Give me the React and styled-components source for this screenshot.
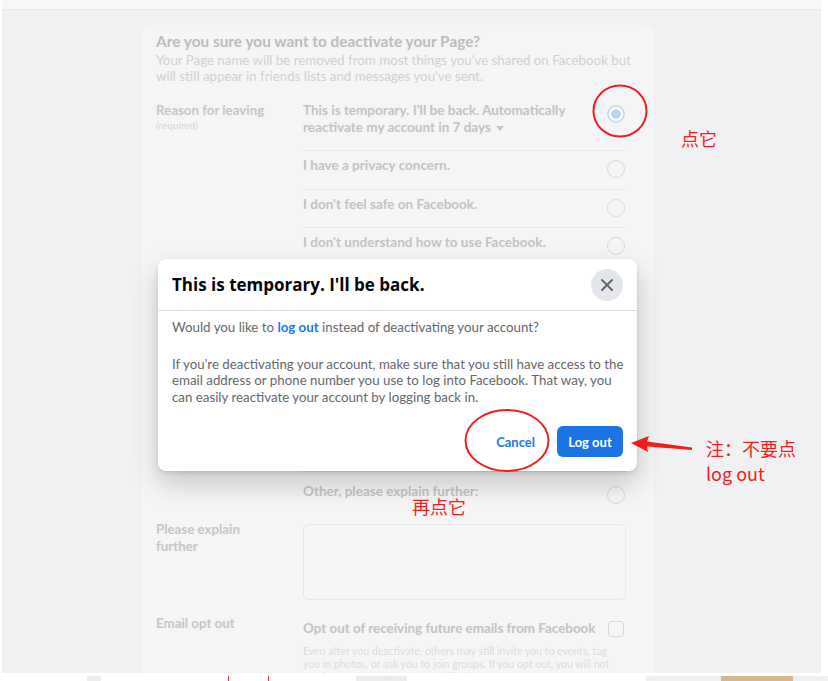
import React from "react";
import styled, { createGlobalStyle } from "styled-components";

const GlobalStyle = createGlobalStyle`
  html, body { margin: 0; padding: 0; }
  body {
    background: #fff;
    font-family: "Lato", "Liberation Sans", sans-serif;
  }
  * { box-sizing: border-box; }
`;

const reasons = [
  { text: "I have a privacy concern." },
  { text: "I don't feel safe on Facebook." },
  { text: "I don't understand how to use Facebook." },
  { text: "I spend too much time using Facebook." },
  { text: "I get too many emails, invitations, and requests from Facebook." },
  { text: "I have another Facebook account." },
  { text: "My account was hacked." },
  { text: "I don't find Facebook useful." },
];

const stripBlocks = [
  { w: 87, bg: "#fff" },
  { w: 14, bg: "#ececee" },
  { w: 128, bg: "#fff", right: true },
  { w: 40, bg: "#fff", right: true },
  { w: 87, bg: "#fff" },
  { w: 51, bg: "#ececee" },
  { w: 239, bg: "#fff" },
  { w: 75, bg: "#efeff1" },
  { w: 72, bg: "#d9b68e" },
  { w: 35, bg: "#f0f0f0" },
];

export default function App() {
  return (
    <Screen>
      <GlobalStyle />
      <Viewport>
        <TopBar />
        <Body>
          <Card>
            <Title>Are you sure you want to deactivate your Page?</Title>
            <Sub>
              Your Page name will be removed from most things you've shared on Facebook but
              <br />
              will still appear in friends lists and messages you've sent.
            </Sub>

            <FieldRow $mt={12}>
              <Label $pt={6}>
                Reason for leaving
                <Required>(required)</Required>
              </Label>
              <OptionList>
                <OptionRow $pb={14}>
                  <OptionText>
                    This is temporary. I'll be back. Automatically reactivate my account in 7 days
                    <Caret />
                  </OptionText>
                  <Radio $checked />
                </OptionRow>
                {reasons.map((r) => (
                  <OptionRow key={r.text}>
                    <OptionText>{r.text}</OptionText>
                    <Radio />
                  </OptionRow>
                ))}
                <OptionRow $pt={10.5} $pb={7.5} $last>
                  <OptionText>Other, please explain further:</OptionText>
                  <Radio />
                </OptionRow>
              </OptionList>
            </FieldRow>

            <FieldRow $mt={10}>
              <Label>
                Please explain
                <br />
                further
              </Label>
              <TextBox />
            </FieldRow>

            <FieldRow $mt={15}>
              <Label>Email opt out</Label>
              <div>
                <CheckLine>
                  <EmailText>Opt out of receiving future emails from Facebook</EmailText>
                  <Checkbox />
                </CheckLine>
                <Hint>
                  Even after you deactivate, others may still invite you to events, tag
                  <br />
                  you in photos, or ask you to join groups. If you opt out, you will not
                  <br />
                  receive these invitations or notifications.
                </Hint>
              </div>
            </FieldRow>
          </Card>
        </Body>
      </Viewport>

      <Strip>
        {stripBlocks.map((b, i) => (
          <StripBlock key={i} $w={b.w} $bg={b.bg} $right={b.right} />
        ))}
      </Strip>

      <Modal>
        <ModalHeader>
          <ModalTitle>This is temporary. I'll be back.</ModalTitle>
          <CloseButton aria-label="Close">
            <svg width="14" height="14" viewBox="0 0 14 14">
              <path d="M2 2 L12 12 M12 2 L2 12" stroke="#606770" strokeWidth="2" strokeLinecap="round" />
            </svg>
          </CloseButton>
        </ModalHeader>
        <ModalBody>
          <ModalText>
            Would you like to <LinkText>log out</LinkText> instead of deactivating your account?
          </ModalText>
          <ModalText $mt={20}>
            If you're deactivating your account, make sure that you still have access to the
            <br />
            email address or phone number you use to log into Facebook. That way, you
            <br />
            can easily reactivate your account by logging back in.
          </ModalText>
        </ModalBody>
        <ModalFooter>
          <TextButton>Cancel</TextButton>
          <PrimaryButton>Log out</PrimaryButton>
        </ModalFooter>
      </Modal>

      <Marks width="828" height="681" viewBox="0 0 828 681">
        <ellipse cx="620" cy="111" rx="26.5" ry="25.5" fill="none" stroke="#f41d1d" strokeWidth="2" />
        <ellipse cx="507" cy="440.5" rx="41.5" ry="30.5" fill="none" stroke="#f41d1d" strokeWidth="2" />
        <path d="M631 443 L649 436 L647 441.5 L692 447.5 L692 450 L647 446.5 L648 452 Z" fill="#f41d1d" />
      </Marks>
      <Note $x={681} $y={126}>点它</Note>
      <Note $x={706} $y={436}>
        注：不要点
        <br />
        log out
      </Note>
      <Note $x={412} $y={494}>再点它</Note>
    </Screen>
  );
}

const Screen = styled.div`
  position: relative;
  width: 828px;
  height: 681px;
  overflow: hidden;
  display: flex;
  flex-direction: column;
`;

const Viewport = styled.div`
  height: 673px;
  flex-shrink: 0;
  display: flex;
  flex-direction: column;
  background: #f1f1f3;
  border-left: 2px solid #fff;
  border-right: 7px solid #fff;
`;

const TopBar = styled.div`
  height: 9px;
  flex-shrink: 0;
  background: #f7f7f8;
  box-shadow: 0 1px 2px rgba(0, 0, 0, 0.04);
`;

const Body = styled.div`
  flex: 1;
  min-height: 0;
  padding: 16px 0 0 140px;
  overflow: hidden;
`;

const Card = styled.div`
  width: 511px;
  height: 100%;
  background: #f5f5f5;
  border-radius: 8px 8px 0 0;
  padding: 8px 14px 0;
  overflow: hidden;
`;

const Title = styled.h2`
  margin: 0;
  font-size: 15.4px;
  line-height: 17px;
  font-weight: 700;
  color: #bcbcbc;
`;

const Sub = styled.p`
  margin: 2px 0 0;
  font-size: 13.3px;
  line-height: 16px;
  color: #d1d1d1;
  white-space: nowrap;
`;

const FieldRow = styled.div`
  display: grid;
  grid-template-columns: 147px 323px;
  align-items: start;
  margin-top: ${(p) => p.$mt || 0}px;
`;

const Label = styled.div`
  padding-top: ${(p) => p.$pt || 0}px;
  font-size: 13.3px;
  line-height: 17px;
  font-weight: 700;
  color: #c6c6c6;
`;

const Required = styled.div`
  font-size: 10px;
  line-height: 13px;
  font-weight: 400;
  color: #d6d6d6;
`;

const OptionList = styled.div`
  display: flex;
  flex-direction: column;
`;

const OptionRow = styled.div`
  display: flex;
  justify-content: space-between;
  align-items: flex-start;
  padding: ${(p) => p.$pt ?? 6}px 1px ${(p) => p.$pb ?? 10.5}px 0;
  border-bottom: ${(p) => (p.$last ? "none" : "1px solid #e6e6e6")};
`;

const OptionText = styled.div`
  max-width: 280px;
  font-size: 13.5px;
  line-height: 17px;
  font-weight: 700;
  color: #c3c3c3;
`;

const Caret = styled.span`
  display: inline-block;
  margin-left: 5px;
  vertical-align: middle;
  border-left: 4px solid transparent;
  border-right: 4px solid transparent;
  border-top: 5px solid #c3c3c3;
`;

const Radio = styled.span`
  flex-shrink: 0;
  width: 18px;
  height: 18px;
  margin-top: 3px;
  border-radius: 50%;
  border: ${(p) => (p.$checked ? "2px solid #c8dcf2" : "1px solid #dadada")};
  background: ${(p) =>
    p.$checked ? "radial-gradient(circle, #bcd4ef 0 4.5px, #fff 5px)" : "transparent"};
`;

const TextBox = styled.div`
  height: 76px;
  margin-top: 3px;
  border: 1px solid #e7e7e7;
  border-radius: 6px;
  background: #f6f6f6;
`;

const CheckLine = styled.div`
  display: flex;
  justify-content: space-between;
  align-items: flex-start;
  padding: 4.5px 2px 0 0;
`;

const EmailText = styled.div`
  font-size: 13.4px;
  line-height: 17px;
  font-weight: 700;
  color: #c3c3c3;
  white-space: nowrap;
`;

const Checkbox = styled.span`
  width: 16px;
  height: 16px;
  margin-top: 1px;
  border: 1px solid #d8d8d8;
  border-radius: 3px;
`;

const Hint = styled.p`
  margin: 8px 0 0;
  font-size: 10.5px;
  line-height: 13px;
  color: #dcdcdc;
  white-space: nowrap;
`;

const Strip = styled.div`
  flex: 1;
  display: flex;
  border-top: 3px solid #fff;
  overflow: hidden;
`;

const StripBlock = styled.div`
  width: ${(p) => p.$w}px;
  flex-shrink: 0;
  background: ${(p) => p.$bg};
  border-right: ${(p) => (p.$right ? "1px solid #e53935" : "none")};
`;

const Modal = styled.div`
  position: absolute;
  left: 158px;
  top: 259px;
  width: 479px;
  background: #fff;
  border-radius: 8px;
  box-shadow: 0 12px 28px rgba(0, 0, 0, 0.2), 0 2px 4px rgba(0, 0, 0, 0.1);
  font-family: "Lato", "Liberation Sans", sans-serif;
`;

const ModalHeader = styled.div`
  height: 52px;
  display: flex;
  align-items: center;
  justify-content: space-between;
  padding: 0 14px;
  border-bottom: 1px solid #dadde1;
`;

const ModalTitle = styled.h3`
  margin: 0;
  font-family: "Open Sans", "Lato", sans-serif;
  font-size: 17px;
  font-weight: 700;
  color: #050505;
`;

const CloseButton = styled.button`
  width: 32px;
  height: 32px;
  border: none;
  border-radius: 50%;
  background: #e4e6eb;
  display: grid;
  place-items: center;
  padding: 0;
`;

const ModalBody = styled.div`
  padding: 8px 14px 0;
`;

const ModalText = styled.p`
  margin: ${(p) => p.$mt || 0}px 0 0;
  font-size: 13.3px;
  line-height: 16.5px;
  color: #65676b;
  white-space: nowrap;
`;

const LinkText = styled.span`
  color: #1877f2;
  font-weight: 700;
`;

const ModalFooter = styled.div`
  display: flex;
  justify-content: flex-end;
  gap: 10px;
  padding: 21px 14px 14px;
`;

const TextButton = styled.button`
  height: 31px;
  padding: 0 12px;
  border: none;
  background: none;
  color: #1877f2;
  font: 700 13px "Lato", "Liberation Sans", sans-serif;
`;

const PrimaryButton = styled.button`
  height: 31px;
  width: 66px;
  border: none;
  border-radius: 6px;
  background: #1b74e4;
  color: #fff;
  font: 700 13px "Lato", "Liberation Sans", sans-serif;
`;

const Marks = styled.svg`
  position: absolute;
  left: 0;
  top: 0;
  pointer-events: none;
`;

const Note = styled.div`
  position: absolute;
  left: ${(p) => p.$x}px;
  top: ${(p) => p.$y}px;
  font-family: "Noto Sans CJK SC", "Noto Sans", sans-serif;
  font-size: 18px;
  line-height: 25px;
  color: #f41d1d;
  white-space: nowrap;
`;
